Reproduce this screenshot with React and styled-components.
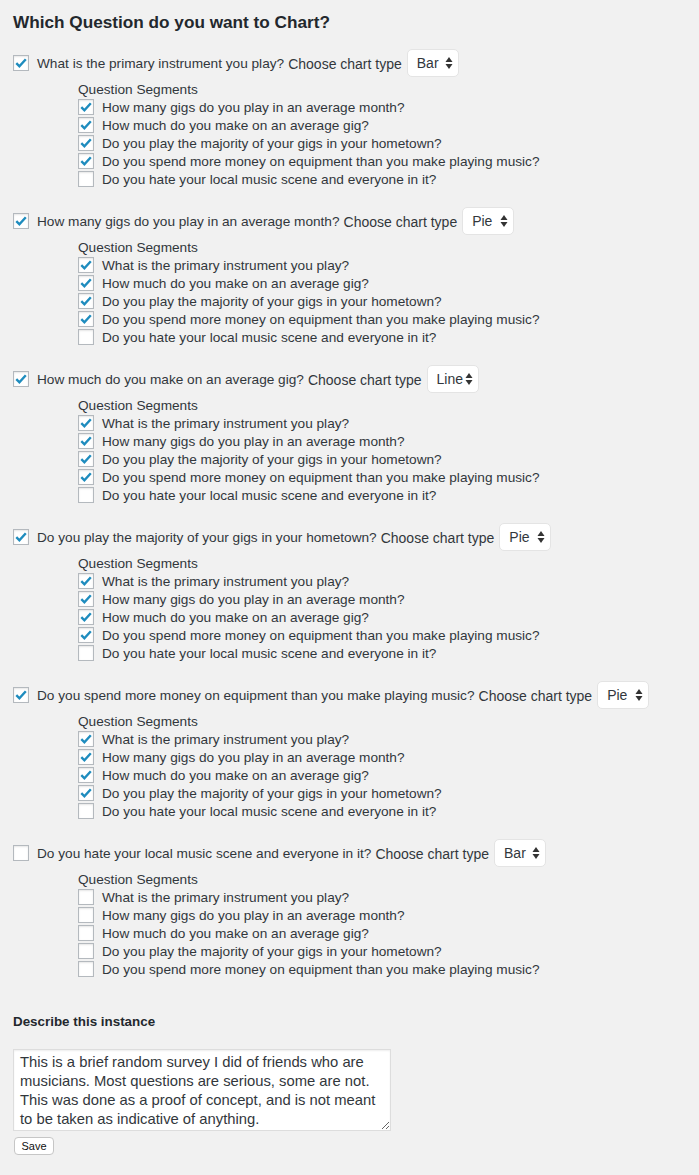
import React from 'react'
import styled, { createGlobalStyle } from 'styled-components'

const GlobalStyle = createGlobalStyle`
  html, body {
    margin: 0;
    padding: 0;
    background: #f1f1f1;
  }
  body {
    font-family: "Liberation Sans", Arial, sans-serif;
    color: #23282d;
    font-size: 13px;
  }
`

const questions = [
  'What is the primary instrument you play?',
  'How many gigs do you play in an average month?',
  'How much do you make on an average gig?',
  'Do you play the majority of your gigs in your hometown?',
  'Do you spend more money on equipment than you make playing music?',
  'Do you hate your local music scene and everyone in it?',
]

const charts = ['Bar', 'Pie', 'Line', 'Pie', 'Pie', 'Bar']

const Page = styled.div`
  padding: 0 13px 20px;
  width: 686px;
  box-sizing: border-box;
`

const Heading = styled.h2`
  margin: 0;
  padding-top: 10px;
  font-size: 17.2px;
  line-height: 24px;
  font-weight: 700;
  color: #23282d;
`

const QuestionList = styled.div`
  margin-top: 15px;
  display: flex;
  flex-direction: column;
  gap: 19px;
`

const Group = styled.div`
  display: flex;
  flex-direction: column;
`

const QuestionRow = styled.div`
  display: flex;
  align-items: center;
  height: 28px;
`

const QuestionText = styled.span`
  margin-left: 8px;
  font-size: 13.65px;
  color: #32373c;
`

const ChooseLabel = styled.span`
  margin-left: 4px;
  font-size: 14px;
  color: #32373c;
  position: relative;
  top: 1px;
`

const SelectBox = styled.div`
  margin-left: 5px;
  width: 52px;
  height: 28px;
  box-sizing: border-box;
  background: #fff;
  border: 1px solid #e4e4e4;
  border-radius: 5px;
  display: flex;
  align-items: center;
  justify-content: space-between;
  padding: 0 5px 0 9px;
  font-size: 14px;
  color: #32373c;
`

const Segments = styled.div`
  margin-left: 65px;
  display: flex;
  flex-direction: column;
  padding-top: 4px;
`

const SegmentsTitle = styled.div`
  height: 17px;
  line-height: 18px;
  font-size: 13.65px;
  color: #32373c;
`

const SegmentRow = styled.div`
  display: flex;
  align-items: center;
  height: 18px;
`

const SegmentText = styled.span`
  margin-left: 8px;
  font-size: 13.65px;
  color: #32373c;
`

const Box = styled.span`
  flex: none;
  width: 16px;
  height: 16px;
  box-sizing: border-box;
  background: #fff;
  border: 1px solid #b4b9be;
  box-shadow: inset 0 1px 2px rgba(0, 0, 0, 0.1);
  display: flex;
  align-items: center;
  justify-content: center;
`

const Describe = styled.div`
  margin-top: 35px;
  font-weight: 700;
  font-size: 13.4px;
  color: #23282d;
  line-height: 18px;
`

const TextArea = styled.textarea`
  display: block;
  margin-top: 18px;
  width: 378px;
  height: 82px;
  box-sizing: border-box;
  padding: 3px 1px 3px 6px;
  border: 1px solid #ddd;
  box-shadow: inset 0 1px 2px rgba(0, 0, 0, 0.07);
  background: #fff;
  font-family: "Liberation Sans", Arial, sans-serif;
  font-size: 14.8px;
  line-height: 19px;
  color: #32373c;
  resize: vertical;
  outline: none;
  overflow: hidden;
`

const SaveButton = styled.button`
  display: block;
  margin: 6px 0 0 1px;
  width: 40px;
  height: 18px;
  padding: 0;
  background: #fff;
  border: 1px solid #c6c6c6;
  border-radius: 4px;
  font-family: "Liberation Sans", Arial, sans-serif;
  font-size: 11px;
  color: #111;
`

function Check({ checked }) {
  return (
    <Box>
      {checked && (
        <svg width="14" height="14" viewBox="0 0 14 14">
          <path d="M2.3 7.2 L5.4 10.3 L11.8 3.2" fill="none" stroke="#1e8cbe" strokeWidth="2.4" />
        </svg>
      )}
    </Box>
  )
}

function Arrows() {
  return (
    <svg width="8" height="14" viewBox="0 0 8 14">
      <path d="M4 1 L7.5 6 L0.5 6 Z" fill="#333" />
      <path d="M4 13 L7.5 8 L0.5 8 Z" fill="#333" />
    </svg>
  )
}

function QuestionGroup({ index }) {
  const others = questions.filter((q, i) => i !== index)
  const active = index !== 5
  return (
    <Group>
      <QuestionRow>
        <Check checked={active} />
        <QuestionText>{questions[index]}</QuestionText>
        <ChooseLabel>Choose chart type</ChooseLabel>
        <SelectBox>
          <span>{charts[index]}</span>
          <Arrows />
        </SelectBox>
      </QuestionRow>
      <Segments>
        <SegmentsTitle>Question Segments</SegmentsTitle>
        {others.map((q, i) => (
          <SegmentRow key={q}>
            <Check checked={active && i < 4} />
            <SegmentText>{q}</SegmentText>
          </SegmentRow>
        ))}
      </Segments>
    </Group>
  )
}

export default function App() {
  return (
    <Page>
      <GlobalStyle />
      <Heading>Which Question do you want to Chart?</Heading>
      <QuestionList>
        {questions.map((q, i) => (
          <QuestionGroup key={q} index={i} />
        ))}
      </QuestionList>
      <Describe>Describe this instance</Describe>
      <TextArea
        defaultValue="This is a brief random survey I did of friends who are musicians. Most questions are serious, some are not. This was done as a proof of concept, and is not meant to be taken as indicative of anything."
      />
      <SaveButton>Save</SaveButton>
    </Page>
  )
}
